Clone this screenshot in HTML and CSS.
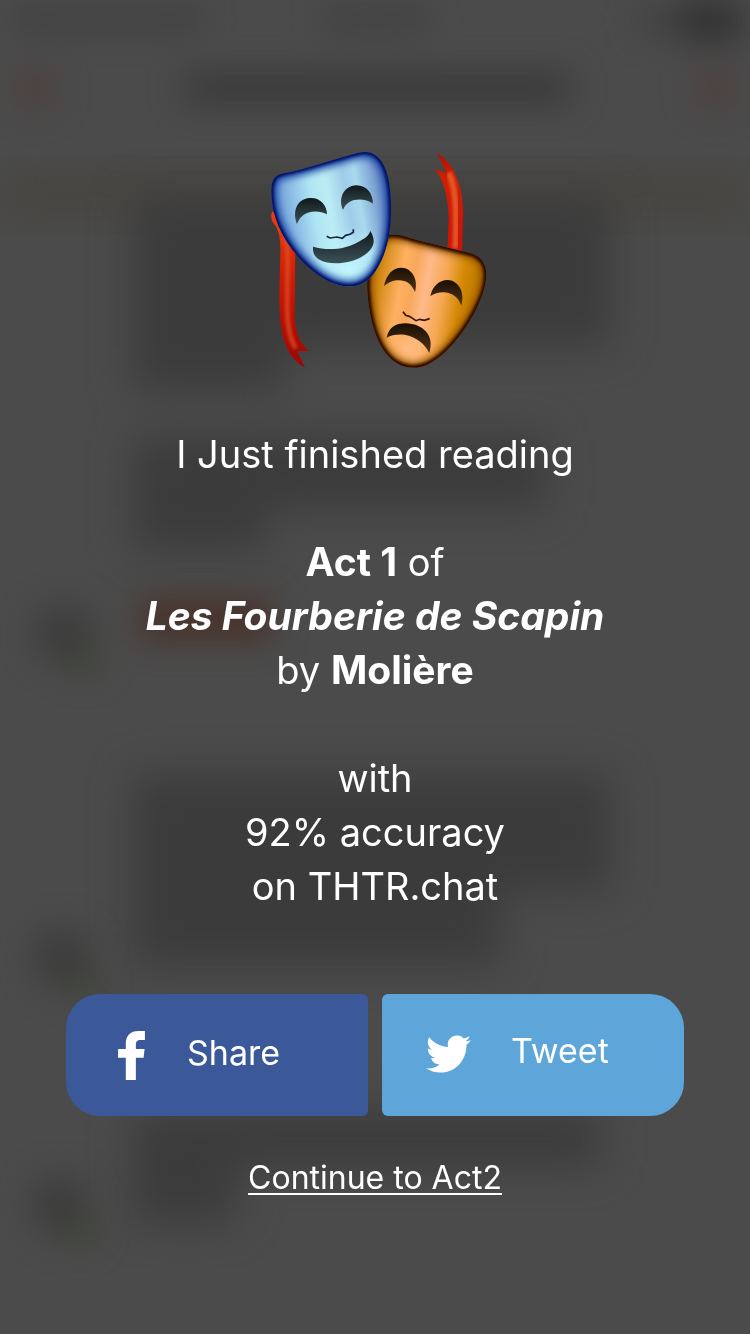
FILE: index.html
```html
<!DOCTYPE html>
<html lang="en">
<head>
<meta charset="utf-8">
<meta name="viewport" content="width=device-width, initial-scale=1">
<title>THTR.chat</title>
<link rel="stylesheet" href="styles.css">
</head>
<body>
<svg class="backdrop" viewBox="0 0 750 1334" preserveAspectRatio="none" aria-hidden="true">
  <defs>
    <filter id="soft" x="-50%" y="-50%" width="200%" height="200%" color-interpolation-filters="sRGB"><feGaussianBlur stdDeviation="20"/></filter>
    <filter id="softer" x="-50%" y="-100%" width="200%" height="300%" color-interpolation-filters="sRGB"><feGaussianBlur stdDeviation="16"/></filter>
  </defs>
  <rect width="750" height="1334" fill="#4b4b4b"/>
  <rect y="175" width="750" height="40" fill="#474540" filter="url(#soft)"/>
  <g fill="#3b3b3b" filter="url(#soft)">
    <path d="M134 196H610V345H285V390H134Z"/>
    <path d="M134 438H545V508H265V550H134Z"/>
    <path d="M134 775H610V890H500V965H134Z"/>
    <path d="M134 1112H600V1165H235V1222H134Z"/>
  </g>
  <g filter="url(#softer)">
    <rect x="185" y="72" width="385" height="32" fill="#3a3a3a"/>
    <rect x="15" y="8" width="185" height="22" fill="#3f3f3f"/>
    <rect x="325" y="8" width="100" height="22" fill="#404040"/>
    <rect x="640" y="8" width="60" height="24" fill="#404040"/>
    <rect x="680" y="0" width="62" height="42" fill="#333333"/>
    <circle cx="34" cy="88" r="22" fill="#4e4140"/>
    <circle cx="716" cy="88" r="22" fill="#4e4140"/>
    <rect x="140" y="598" width="132" height="42" fill="#48322a"/>
    <circle cx="64" cy="634" r="30" fill="#3d3d3d"/>
    <circle cx="84" cy="660" r="15" fill="#3e4438"/>
    <circle cx="62" cy="958" r="30" fill="#3d3d3d"/>
    <circle cx="84" cy="984" r="15" fill="#3e4438"/>
    <circle cx="60" cy="1206" r="30" fill="#3d3d3d"/>
    <circle cx="80" cy="1230" r="16" fill="#3e4438"/>
  </g>
</svg>

<main class="result">
  <svg class="masks" viewBox="-15 0 720 720" role="img" aria-label="Theatre masks">
    <defs>
      <linearGradient id="blueFace" x1="0" y1="0.2" x2="1" y2="0">
        <stop offset="0" stop-color="#6d9bd8"/><stop offset="0.3" stop-color="#b0e5f4"/><stop offset="0.43" stop-color="#bcedf5"/><stop offset="0.58" stop-color="#9fcde9"/><stop offset="0.68" stop-color="#a9d9ee"/><stop offset="0.85" stop-color="#7194cc"/><stop offset="1" stop-color="#4a63ae"/>
      </linearGradient>
      <radialGradient id="chin" cx="270" cy="390" r="130" gradientUnits="userSpaceOnUse">
        <stop offset="0" stop-color="#c0f5fb"/><stop offset="0.5" stop-color="#b8effa" stop-opacity="0.8"/><stop offset="1" stop-color="#b8effa" stop-opacity="0"/>
      </radialGradient>
      <linearGradient id="goldFace" x1="0" y1="0" x2="1" y2="0.2">
        <stop offset="0" stop-color="#b77700"/><stop offset="0.15" stop-color="#d0870f"/><stop offset="0.34" stop-color="#ffb061"/><stop offset="0.44" stop-color="#f7a85a"/><stop offset="0.55" stop-color="#ffba8b"/><stop offset="0.7" stop-color="#f5a750"/><stop offset="0.84" stop-color="#d38905"/><stop offset="1" stop-color="#b87300"/>
      </linearGradient>
      <radialGradient id="goldChin" cx="440" cy="625" r="90" gradientUnits="userSpaceOnUse">
        <stop offset="0" stop-color="#ffbd83"/><stop offset="1" stop-color="#ffaf55" stop-opacity="0"/>
      </radialGradient>
      <linearGradient id="blueHole" x1="0" y1="0" x2="0" y2="1"><stop offset="0" stop-color="#11191c"/><stop offset="1" stop-color="#3b5157"/></linearGradient>
      <linearGradient id="goldHole" x1="0" y1="0" x2="0" y2="1"><stop offset="0" stop-color="#1a0e02"/><stop offset="1" stop-color="#523518"/></linearGradient>
      <linearGradient id="ribbonLeft" x1="0" y1="220" x2="0" y2="680" gradientUnits="userSpaceOnUse"><stop offset="0" stop-color="#ef3b0c"/><stop offset="0.4" stop-color="#cf1d06"/><stop offset="0.7" stop-color="#b80f04"/><stop offset="1" stop-color="#9c0803"/></linearGradient>
      <linearGradient id="ribbonRight" x1="0" y1="40" x2="0" y2="340" gradientUnits="userSpaceOnUse"><stop offset="0" stop-color="#b80c02"/><stop offset="0.25" stop-color="#cf1f05"/><stop offset="1" stop-color="#cb1206"/></linearGradient>
      <path id="blueShape" d="M65 101C135 88 215 59 295 38C329 30 356 43 372 77C390 116 393 165 393 212C393 268 382 333 356 377C334 420 302 442 259 439C181 433 93 345 55 257C40 221 33 184 34 148C35 121 45 105 65 101Z"/>
      <path id="goldShape" d="M382 286C409 278 437 291 468 299L620 337C648 342 667 355 675 378C688 419 665 479 639 526C604 588 554 650 502 674C467 690 426 686 394 658C347 614 327 532 322 451C318 383 340 306 382 286Z"/>
      <clipPath id="blueClip"><use href="#blueShape"/></clipPath>
      <clipPath id="goldClip"><use href="#goldShape"/></clipPath>
      <filter id="edge" x="-20%" y="-20%" width="140%" height="140%" color-interpolation-filters="sRGB"><feGaussianBlur stdDeviation="11"/></filter>
      <filter id="fineEdge" x="-20%" y="-20%" width="140%" height="140%" color-interpolation-filters="sRGB"><feGaussianBlur stdDeviation="5"/></filter>
    </defs>
    <path fill="url(#ribbonLeft)" d="M38 214C30 226 33 242 44 254C66 285 61 330 60 382C58 460 54 550 75 610C88 645 109 671 135 682L111 633L147 633C117 609 103 571 104 516L106 310L70 250Z"/>
    <path fill="none" stroke="#dc5326" stroke-opacity=".7" stroke-width="14" filter="url(#fineEdge)" d="M57 250C90 310 83 350 82 430C80 520 80 580 107 625"/>
    <path fill="url(#ribbonRight)" d="M532 40C583 71 609 139 609 218L606 338L562 334L566 240C566 180 552 115 522 87L560 100Z"/>
    <path fill="none" stroke="#e9652d" stroke-opacity=".8" stroke-width="18" filter="url(#fineEdge)" d="M566 98C590 155 590 210 586 326"/>
    <g clip-path="url(#goldClip)">
      <use href="#goldShape" fill="url(#goldFace)"/>
      <use href="#goldShape" fill="url(#goldChin)"/>
      <use href="#goldShape" fill="none" stroke="#8b4d00" stroke-width="32" filter="url(#edge)"/>
      <use href="#goldShape" fill="none" stroke="#240500" stroke-width="16" filter="url(#fineEdge)"/>
    </g>
    <g fill="url(#goldHole)">
      <path d="M372 438C379 402 400 382 425 383C455 384 476 417 465 457C455 428 433 418 409 421C394 423 382 430 372 438Z"/>
      <path d="M511 468C517 440 537 420 563 420C594 421 616 454 604 497C594 470 576 458 550 457C534 457 522 462 511 468Z"/>
      <path d="M380 593C386 562 407 550 437 550C487 551 526 586 508 639C491 607 469 592 434 584C412 582 393 585 380 593Z"/>
    </g>
    <path fill="none" stroke="#321600" stroke-width="5" d="M429 515L437 526L448 529L459 536L468 542L479 538L493 541L509 536"/>
    <g clip-path="url(#blueClip)">
      <use href="#blueShape" fill="url(#blueFace)"/>
      <use href="#blueShape" fill="url(#chin)"/>
      <use href="#blueShape" fill="none" stroke="#1e49a4" stroke-width="36" filter="url(#edge)"/>
      <use href="#blueShape" fill="none" stroke="#00085a" stroke-width="14" filter="url(#fineEdge)"/>
    </g>
    <g fill="url(#blueHole)">
      <path d="M111 252C97 216 109 177 149 174C181 172 201 196 201 223C181 212 162 213 143 218C125 225 116 238 111 252Z"/>
      <path d="M249 210C232 169 257 137 289 136C321 136 339 162 339 191C322 179 303 176 282 180C264 185 254 197 249 210Z"/>
      <path d="M159 320C203 333 256 329 296 305C315 295 326 288 331 273C352 306 338 330 309 348C270 373 209 376 180 360C162 350 158 337 159 320Z"/>
    </g>
    <path fill="none" stroke="#13253a" stroke-width="5" d="M200 289L210 294L231 291L247 295L257 286L270 283L280 277L280 268"/>
  </svg>

  <section class="message">
    <p>I Just finished reading</p>
    <p><strong>Act 1</strong> of<br><strong><em>Les Fourberie de Scapin</em></strong><br>by <strong>Molière</strong></p>
    <p>with<br>92% accuracy<br>on THTR.chat</p>
  </section>

  <div class="actions">
    <button class="action share" type="button">
      <svg class="facebook" viewBox="205 151 80 146" aria-hidden="true"><path fill="currentColor" d="M228 297V231H205V205H228V190C228 165 241 151 266 151H285V178H271C260 178 258 185 258 193V205H284L281 231H258V297Z"/></svg>
      <span>Share</span>
    </button>
    <button class="action tweet" type="button">
      <svg class="twitter" viewBox="0 2 24 20" preserveAspectRatio="none" aria-hidden="true"><path fill="currentColor" d="M23.954 4.569a10 10 0 01-2.825.775 4.958 4.958 0 002.163-2.723c-.951.555-2.005.959-3.127 1.184a4.92 4.92 0 00-8.384 4.482C7.691 8.094 4.066 6.13 1.64 3.161a4.822 4.822 0 00-.666 2.475c0 1.71.87 3.213 2.188 4.096a4.904 4.904 0 01-2.228-.616v.061a4.923 4.923 0 003.946 4.827 4.996 4.996 0 01-2.212.085 4.937 4.937 0 004.604 3.417 9.868 9.868 0 01-6.102 2.105c-.39 0-.779-.023-1.17-.067a13.995 13.995 0 007.557 2.209c9.054 0 13.999-7.496 13.999-13.986 0-.209 0-.42-.015-.63a9.936 9.936 0 002.46-2.548z"/></svg>
      <span>Tweet</span>
    </button>
  </div>
  <a class="continue" href="#act2">Continue to Act2</a>
</main>
</body>
</html>
```

FILE: styles.css
```css
* {
  box-sizing: border-box;
}

body {
  margin: 0;
  min-height: 100vh;
  background: #4b4b4b;
  color: #fff;
  font-family: Inter, "Liberation Sans", sans-serif;
  font-weight: 400;
}

.backdrop {
  position: fixed;
  inset: 0;
  z-index: -1;
  width: 100%;
  height: 100%;
}

.result {
  display: flex;
  flex-direction: column;
  align-items: center;
  padding: 140px 66px 48px;
}

.masks {
  width: 240px;
  height: 240px;
}

.message {
  display: flex;
  flex-direction: column;
  gap: 54px;
  margin-top: 47px;
  font-size: 38px;
  line-height: 54px;
  text-align: center;
}

.message p {
  margin: 0;
}

.message strong {
  font-size: 39px;
  font-weight: 700;
}

.actions {
  display: grid;
  grid-template-columns: 1fr 1fr;
  gap: 14px;
  align-self: stretch;
  margin-top: 81px;
}

.action {
  display: flex;
  align-items: center;
  height: 122px;
  border: 0;
  color: inherit;
  font: inherit;
  font-size: 34px;
  cursor: pointer;
}

.share {
  gap: 42px;
  padding: 0 0 0 52px;
  border-radius: 34px 6px 6px 34px;
  background: #3b5998;
}

.share span {
  padding-bottom: 6px;
}

.tweet {
  gap: 40px;
  padding: 0 0 2px 44px;
  border-radius: 6px 34px 34px 6px;
  background: #5ea6da;
}

.tweet span {
  padding-bottom: 8px;
}

.facebook {
  width: 27px;
  height: 49px;
}

.twitter {
  width: 45px;
  height: 38px;
}

.continue {
  margin-top: 40px;
  color: inherit;
  font-size: 32px;
  line-height: 44px;
  text-decoration-thickness: 2px;
  text-underline-offset: 4px;
}
```
